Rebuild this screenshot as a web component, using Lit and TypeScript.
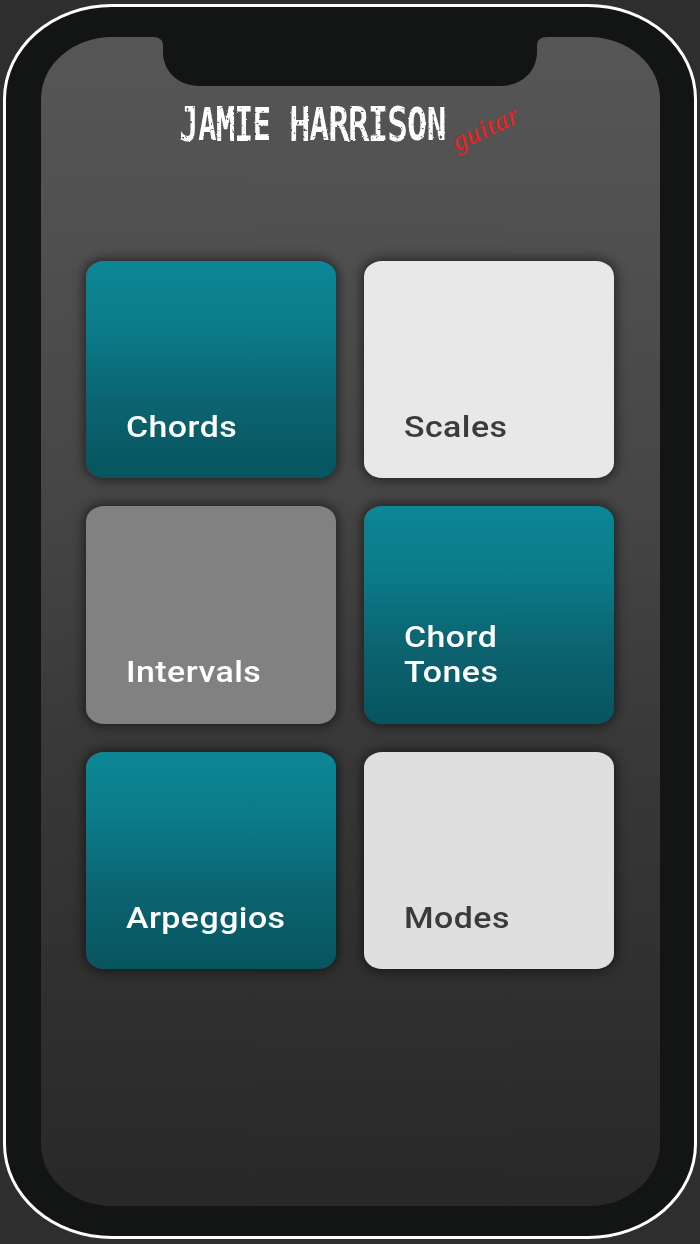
import { LitElement, html, css } from "lit";
import { customElement, property } from "lit/decorators.js";

@customElement("menu-tile")
class MenuTile extends LitElement {
  @property() label = "";
  @property({ reflect: true }) tone = "teal";

  static styles = css`
    :host {
      display: flex;
      align-items: flex-end;
      box-sizing: border-box;
      padding: 0 0 34px 39.8px;
      border-radius: 18px / 15.5px;
      box-shadow: 0 0 12px 2px rgba(0, 0, 0, 0.55);
      color: #fff;
      background: linear-gradient(#0c8696, #0b7c8a 30%, #0c6370 65%, #06555f);
    }
    :host([tone="light"]) { background: #e8e8e8; color: #3b3b3b; }
    :host([tone="silver"]) { background: #dfdfdf; color: #3b3b3b; }
    :host([tone="gray"]) { background: #818181; }
    .label {
      font: 500 30px/35.5px Roboto, sans-serif;
      letter-spacing: 0.4px;
      width: 130px;
      transform: scaleX(1.13);
      transform-origin: 0 0;
    }
  `;

  render() {
    return html`<div class="label">${this.label}</div>`;
  }
}

@customElement("app-root")
class AppRoot extends LitElement {
  static styles = css`
    :host { display: block; }
    .page {
      box-sizing: border-box;
      width: 700px;
      height: 1244px;
      padding: 4px 3px;
      background: #2e2e2e;
      overflow: hidden;
    }
    .phone {
      box-sizing: border-box;
      height: 1235px;
      border: 3px solid #fff;
      border-radius: 109px / 95px;
      background: #131514;
      padding: 30px 34.5px;
    }
    .screen {
      display: flex;
      flex-direction: column;
      align-items: center;
      height: 1169px;
      border-radius: 71px / 62px;
      background: linear-gradient(#565656, #505050 17%, #464646 39%, #393939 60%, #2d2d2d 88%, #282828);
    }
    .notch { display: block; flex: none; width: 394px; height: 49px; }
    .brand { display: block; flex: none; width: 400px; height: 90px; }
    .mark {
      font: 700 44.5px "DejaVu Sans Mono", monospace;
      fill: #fff;
      stroke: #fff;
      stroke-width: 0;
    }
    .thin { font-weight: 400; stroke-width: 1.8px; }
    .script {
      font: italic 400 27px "Liberation Serif", serif;
      fill: #f81a1a;
    }
    .tiles {
      display: grid;
      grid-template-columns: 250px 250px;
      grid-auto-rows: 217.5px;
      gap: 28px 28.5px;
      margin-top: 84.75px;
    }
  `;

  render() {
    return html`
      <div class="page">
        <div class="phone">
          <div class="screen">
            <svg class="notch" viewBox="0 0 394 49">
              <path fill="#131514" d="M0 -1V0C6 0 10 3 10 8V15C10 35 26 49 47 49H347C368 49 384 35 384 15V8C384 3 388 0 394 0V-1Z" />
            </svg>
            <svg class="brand" viewBox="150 86 400 90">
              <defs>
                <filter id="worn" x="-5%" y="-10%" width="110%" height="120%">
                  <feTurbulence type="fractalNoise" baseFrequency="0.28" numOctaves="2" seed="4" result="n" />
                  <feDisplacementMap in="SourceGraphic" in2="n" scale="2" xChannelSelector="R" yChannelSelector="G" result="d" />
                  <feColorMatrix in="n" type="matrix" values="0 0 0 0 1  0 0 0 0 1  0 0 0 0 1  0 0 9 0 -1.9" result="m" />
                  <feComposite in="d" in2="m" operator="in" />
                </filter>
              </defs>
              <g class="mark" filter="url(#worn)">
                <text transform="translate(180 140.3) scale(.68 1)"><tspan class="thin">J</tspan>A<tspan class="thin">MI</tspan>E</text>
                <text transform="translate(290 140.3) scale(.73 1)"><tspan class="thin">H</tspan>A<tspan class="thin">RRIS</tspan>ON</text>
              </g>
              <text class="script" transform="translate(457 151) rotate(-25)" textLength="70">guitar</text>
            </svg>
            <div class="tiles">
              <menu-tile label="Chords"></menu-tile>
              <menu-tile label="Scales" tone="light"></menu-tile>
              <menu-tile label="Intervals" tone="gray"></menu-tile>
              <menu-tile label="Chord Tones"></menu-tile>
              <menu-tile label="Arpeggios"></menu-tile>
              <menu-tile label="Modes" tone="silver"></menu-tile>
            </div>
          </div>
        </div>
      </div>
    `;
  }
}
